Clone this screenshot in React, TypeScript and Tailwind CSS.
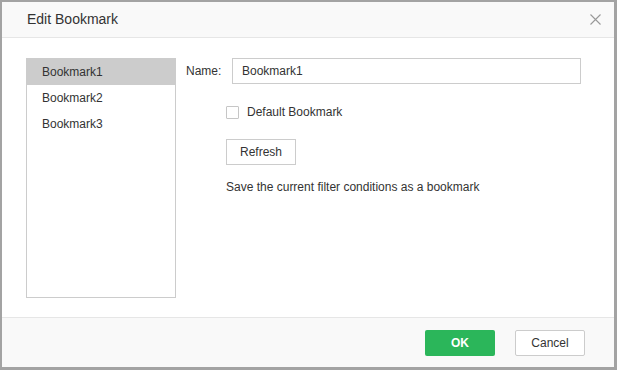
import React from "react";

const bookmarks = ["Bookmark1", "Bookmark2", "Bookmark3"];

export default function App() {
  const selected = 0;

  return (
    <div
      className="w-[617px] h-[370px] flex flex-col bg-white border-t-2 border-l-2 border-r-[3px] border-b-[3px] border-[#a3a3a3] text-[#333] overflow-hidden"
      style={{ fontFamily: '"Liberation Sans", Arial, sans-serif' }}
    >
      <header className="h-[36px] shrink-0 flex items-center justify-between bg-[#f9f9f9] border-b border-[#e6e6e6] pl-[25px] pr-[13px]">
        <span className="text-[14px]">Edit Bookmark</span>
        <button className="w-[12px] h-[12px] flex items-center justify-center text-[#999]">
          <svg width="11" height="11" viewBox="0 0 11 11" fill="none">
            <path d="M0.5 0.5L10.5 10.5M10.5 0.5L0.5 10.5" stroke="currentColor" strokeWidth="1.1" />
          </svg>
        </button>
      </header>

      <div className="flex-1 flex pt-[20px] pl-[24px]">
        <ul className="w-[150px] h-[240px] border border-[#cccccc] text-[12px]">
          {bookmarks.map((b, i) => (
            <li
              key={b}
              className={
                "h-[26px] flex items-center pl-[15px] " +
                (i === selected ? "bg-[#cccccc]" : "")
              }
            >
              {b}
            </li>
          ))}
        </ul>

        <div className="pl-[10px] text-[12px]">
          <div className="h-[26px] flex items-center">
            <span className="w-[46px]">Name:</span>
            <input
              defaultValue="Bookmark1"
              className="w-[349px] h-[26px] border border-[#cccccc] px-[9px] text-[12px] text-[#333] outline-none"
            />
          </div>

          <div className="pl-[40px]">
            <label className="h-[20px] mt-[18px] flex items-center">
              <span className="w-[13px] h-[13px] border border-[#c6c6c6] bg-white rounded-[1px]" />
              <span className="ml-[8px]">Default Bookmark</span>
            </label>

            <button className="mt-[17px] w-[70px] h-[26px] border border-[#cccccc] bg-white text-[12px] text-[#333]">
              Refresh
            </button>

            <p className="mt-[14px] h-[16px] flex items-center">
              Save the current filter conditions as a bookmark
            </p>
          </div>
        </div>
      </div>

      <footer className="h-[50px] shrink-0 flex items-center justify-end gap-[20px] bg-[#f9f9f9] border-t border-[#e6e6e6] pr-[29px] pt-[1px]">
        <button className="w-[70px] h-[26px] rounded-[2px] bg-[#2bb65a] text-white text-[12px] font-bold">
          OK
        </button>
        <button className="w-[70px] h-[26px] rounded-[2px] border border-[#cccccc] bg-white text-[12px] text-[#333]">
          Cancel
        </button>
      </footer>
    </div>
  );
}
